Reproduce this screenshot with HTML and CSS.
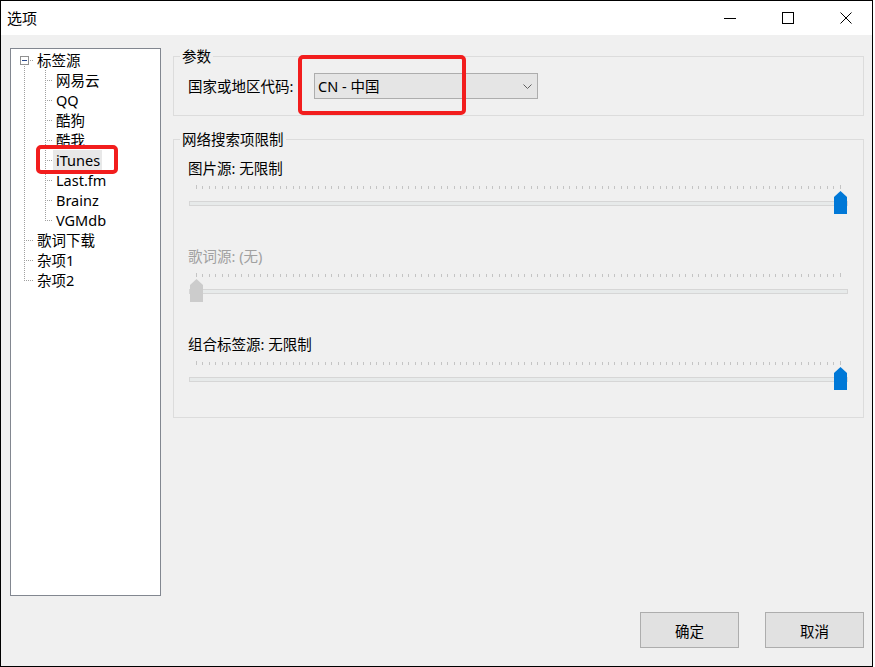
FILE: index.html
```html
<!DOCTYPE html>
<html lang="zh-CN">
<head>
<meta charset="utf-8">
<title>选项</title>
<link rel="stylesheet" href="styles.css">
</head>
<body>
<div class="window">
  <header class="titlebar">
    <span class="title">选项</span>
    <div class="caption-btns">
      <span class="cap"><svg width="12" height="12" viewBox="0 0 12 12"><path d="M0 6.5H12" stroke="#000" stroke-width="1"/></svg></span>
      <span class="cap"><svg width="12" height="12" viewBox="0 0 12 12"><rect x="0.5" y="0.5" width="11" height="11" fill="none" stroke="#000" stroke-width="1"/></svg></span>
      <span class="cap"><svg width="12" height="12" viewBox="0 0 12 12"><path d="M0.5 0.5L11.5 11.5M11.5 0.5L0.5 11.5" stroke="#000" stroke-width="1"/></svg></span>
    </div>
  </header>

  <div class="main">
    <div class="tree">
      <div class="row"><span class="col-r r-first"><span class="expander"></span></span><span class="lbl">标签源</span></div>
      <div class="row"><span class="col-r r-pass"></span><span class="col-c c-mid"></span><span class="lbl">网易云</span></div>
      <div class="row"><span class="col-r r-pass"></span><span class="col-c c-mid"></span><span class="lbl">QQ</span></div>
      <div class="row"><span class="col-r r-pass"></span><span class="col-c c-mid"></span><span class="lbl">酷狗</span></div>
      <div class="row"><span class="col-r r-pass"></span><span class="col-c c-mid"></span><span class="lbl">酷我</span></div>
      <div class="row"><span class="col-r r-pass"></span><span class="col-c c-mid"></span><span class="lbl selected">iTunes</span></div>
      <div class="row"><span class="col-r r-pass"></span><span class="col-c c-mid"></span><span class="lbl">Last.fm</span></div>
      <div class="row"><span class="col-r r-pass"></span><span class="col-c c-mid"></span><span class="lbl">Brainz</span></div>
      <div class="row"><span class="col-r r-pass"></span><span class="col-c c-last"></span><span class="lbl">VGMdb</span></div>
      <div class="row"><span class="col-r r-mid"></span><span class="lbl">歌词下载</span></div>
      <div class="row"><span class="col-r r-mid"></span><span class="lbl">杂项1</span></div>
      <div class="row"><span class="col-r r-last"></span><span class="lbl">杂项2</span></div>
    </div>

    <div class="pane">
      <section class="group g-params">
        <span class="group-title">参数</span>
        <div class="field">
          <span class="field-label">国家或地区代码:</span>
          <div class="combo">
            <span class="combo-text">CN - 中国</span>
            <svg class="chev" width="9" height="5" viewBox="0 0 9 5"><path d="M0.5 0.5L4.5 4.5L8.5 0.5" fill="none" stroke="#606060" stroke-width="1"/></svg>
          </div>
        </div>
      </section>

      <section class="group g-limits">
        <span class="group-title">网络搜索项限制</span>

        <div class="setting">
          <div class="setting-label">图片源: 无限制</div>
          <div class="slider">
            <div class="ticks"></div>
            <div class="track"></div>
            <svg class="thumb at-max" width="13" height="23" viewBox="0 0 13 23"><polygon points="6.5,0 13,6 13,23 0,23 0,6" fill="#0078d7"/></svg>
          </div>
        </div>

        <div class="setting">
          <div class="setting-label disabled">歌词源: (无)</div>
          <div class="slider">
            <div class="ticks"></div>
            <div class="track"></div>
            <svg class="thumb at-min" width="13" height="23" viewBox="0 0 13 23"><polygon points="6.5,0 13,6 13,23 0,23 0,6" fill="#cccccc"/></svg>
          </div>
        </div>

        <div class="setting">
          <div class="setting-label">组合标签源: 无限制</div>
          <div class="slider">
            <div class="ticks"></div>
            <div class="track"></div>
            <svg class="thumb at-max" width="13" height="23" viewBox="0 0 13 23"><polygon points="6.5,0 13,6 13,23 0,23 0,6" fill="#0078d7"/></svg>
          </div>
        </div>
      </section>
    </div>
  </div>

  <footer class="footer">
    <button class="btn">确定</button>
    <button class="btn">取消</button>
  </footer>

  <div class="mark mark-itunes"></div>
  <div class="mark mark-combo"></div>
</div>
<script src="script.js"></script>
</body>
</html>
```

FILE: styles.css
```css
html, body {
  margin: 0;
  padding: 0;
  background: #ffffff;
}

body {
  font-family: "Noto Sans", "Noto Sans CJK SC", sans-serif;
  font-size: 14.5px;
  color: #000;
}

.window {
  position: relative;
  width: 873px;
  height: 667px;
  border: 1px solid #000;
  box-sizing: border-box;
  background: #f0f0f0;
  overflow: hidden;
  display: flex;
  flex-direction: column;
}

/* title bar */
.titlebar {
  height: 34px;
  flex: none;
  background: #fff;
  display: flex;
  align-items: center;
  padding-left: 6px;
}

.title {
  font-size: 15px;
  line-height: 20px;
}

.caption-btns {
  margin-left: auto;
  margin-right: -3px;
  display: flex;
  height: 100%;
}

.cap {
  width: 58px;
  height: 100%;
  display: flex;
  align-items: center;
  justify-content: center;
}

.cap svg {
  display: block;
}

/* main area */
.main {
  flex: none;
  display: flex;
  gap: 12px;
  padding: 13px 8px 0 9px;
}

.tree {
  width: 151px;
  height: 548px;
  box-sizing: border-box;
  border: 1px solid #828790;
  background: #fff;
  padding-top: 1px;
}

.row {
  height: 20px;
  display: flex;
}

.col-r {
  width: 23px;
  flex: none;
  display: flex;
  align-items: center;
}

.col-c {
  width: 19px;
  flex: none;
}

.lbl {
  line-height: 20px;
  padding: 0 2px 0 3px;
  white-space: nowrap;
}

.lbl.selected {
  background: #e8e8e8;
}

/* dotted connector lines */
.r-first {
  background:
    repeating-linear-gradient(to bottom, #a0a0a0 0 1px, transparent 1px 2px) 13px 10px / 1px 10px no-repeat,
    repeating-linear-gradient(to right, #a0a0a0 0 1px, transparent 1px 2px) 19px 10px / 4px 1px no-repeat;
}

.r-pass {
  background:
    repeating-linear-gradient(to bottom, #a0a0a0 0 1px, transparent 1px 2px) 13px 0 / 1px 20px no-repeat;
}

.r-mid {
  background:
    repeating-linear-gradient(to bottom, #a0a0a0 0 1px, transparent 1px 2px) 13px 0 / 1px 20px no-repeat,
    repeating-linear-gradient(to right, #a0a0a0 0 1px, transparent 1px 2px) 15px 10px / 8px 1px no-repeat;
}

.r-last {
  background:
    repeating-linear-gradient(to bottom, #a0a0a0 0 1px, transparent 1px 2px) 13px 0 / 1px 11px no-repeat,
    repeating-linear-gradient(to right, #a0a0a0 0 1px, transparent 1px 2px) 15px 10px / 8px 1px no-repeat;
}

.c-mid {
  background:
    repeating-linear-gradient(to bottom, #a0a0a0 0 1px, transparent 1px 2px) 11px 0 / 1px 20px no-repeat,
    repeating-linear-gradient(to right, #a0a0a0 0 1px, transparent 1px 2px) 13px 10px / 6px 1px no-repeat;
}

.c-last {
  background:
    repeating-linear-gradient(to bottom, #a0a0a0 0 1px, transparent 1px 2px) 11px 0 / 1px 11px no-repeat,
    repeating-linear-gradient(to right, #a0a0a0 0 1px, transparent 1px 2px) 13px 10px / 6px 1px no-repeat;
}

.expander {
  width: 9px;
  height: 9px;
  box-sizing: border-box;
  margin-left: 9px;
  border: 1px solid #919191;
  background: #fff;
  display: flex;
  align-items: center;
  justify-content: center;
}

.expander::after {
  content: "";
  width: 5px;
  height: 1px;
  background: #2b4a8c;
}

/* right pane */
.pane {
  flex: 1;
  padding-top: 8px;
}

.group {
  position: relative;
  border: 1px solid #dcdcdc;
}

.group-title {
  position: absolute;
  top: -11px;
  left: 6px;
  padding: 0 2px;
  line-height: 20px;
  background: #f0f0f0;
}

.field {
  display: flex;
  align-items: center;
  padding: 16px 0 16px 14px;
}

.field-label {
  width: 126px;
  line-height: 20px;
  white-space: nowrap;
}

.combo {
  width: 224px;
  height: 26px;
  box-sizing: border-box;
  border: 1px solid #adadad;
  background: #e5e5e5;
  display: flex;
  align-items: center;
  padding-left: 3px;
}

.combo-text {
  line-height: 20px;
}

.chev {
  margin-left: auto;
  margin-right: 5px;
  display: block;
}

.g-limits {
  margin-top: 23px;
  padding: 18px 0 35px;
}

.setting + .setting {
  margin-top: 40px;
}

.setting-label {
  padding-left: 14px;
  line-height: 20px;
}

.setting-label.disabled {
  color: #a0a0a0;
}

.slider {
  position: relative;
  padding-top: 7px;
}

.ticks {
  height: 4px;
  margin: 0 22px;
  display: flex;
  justify-content: space-between;
  align-items: flex-end;
}

.ticks i {
  width: 1px;
  height: 3px;
  background: #c4c4c4;
}

.ticks i:first-child,
.ticks i:last-child {
  height: 4px;
}

.track {
  height: 5px;
  margin: 12px 15px 0;
  box-sizing: border-box;
  border: 1px solid #d6d6d6;
  background: #e7eaea;
}

.thumb {
  position: absolute;
  top: 13px;
  display: block;
}

.thumb.at-max {
  left: 660px;
}

.thumb.at-min {
  left: 16px;
}

/* footer buttons */
.footer {
  flex: none;
  display: flex;
  justify-content: flex-end;
  gap: 26px;
  padding: 16px 8px 0 0;
}

.btn {
  width: 99px;
  height: 36px;
  box-sizing: border-box;
  border: 1px solid #adadad;
  background: #e1e1e1;
  font: inherit;
  color: #000;
  padding: 0;
}

/* red annotation marks */
.mark {
  position: absolute;
  box-sizing: border-box;
  border: 4px solid #f21d1d;
  border-radius: 5px;
}

.mark-itunes {
  left: 35px;
  top: 144px;
  width: 82px;
  height: 29px;
}

.mark-combo {
  left: 297px;
  top: 54px;
  width: 168px;
  height: 60px;
}
```

FILE: script.js
```js
document.querySelectorAll('.ticks').forEach(function (t) {
  for (var i = 0; i <= 100; i++) {
    t.appendChild(document.createElement('i'));
  }
});
```
